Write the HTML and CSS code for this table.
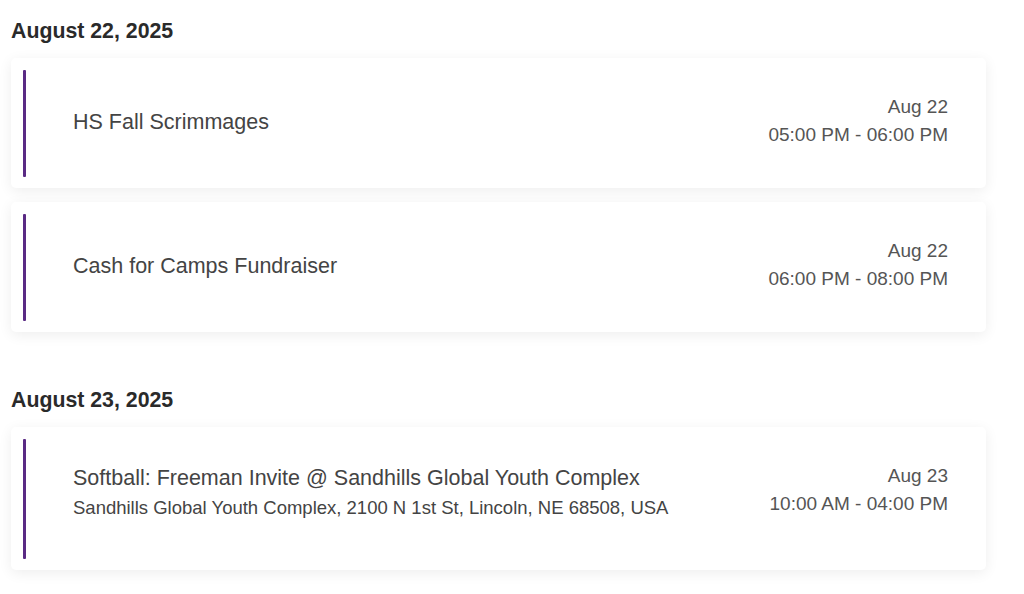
FILE: index.html
```html
<!DOCTYPE html>
<html lang="en">
<head>
<meta charset="utf-8">
<title>Events</title>
<link rel="stylesheet" href="styles.css">
</head>
<body>
<main class="page">
  <section class="day">
    <h2 class="day-title">August 22, 2025</h2>
    <div class="cards">
      <article class="card">
        <div class="bar"></div>
        <div class="content">
          <div class="info">
            <div class="title">HS Fall Scrimmages</div>
          </div>
          <div class="when">
            <div>Aug 22</div>
            <div>05:00 PM - 06:00 PM</div>
          </div>
        </div>
      </article>
      <article class="card">
        <div class="bar"></div>
        <div class="content">
          <div class="info">
            <div class="title">Cash for Camps Fundraiser</div>
          </div>
          <div class="when">
            <div>Aug 22</div>
            <div>06:00 PM - 08:00 PM</div>
          </div>
        </div>
      </article>
    </div>
  </section>
  <section class="day">
    <h2 class="day-title">August 23, 2025</h2>
    <div class="cards">
      <article class="card">
        <div class="bar"></div>
        <div class="content content--tall">
          <div class="info info--top">
            <div class="title">Softball: Freeman Invite @ Sandhills Global Youth Complex</div>
            <div class="location">Sandhills Global Youth Complex, 2100 N 1st St, Lincoln, NE 68508, USA</div>
          </div>
          <div class="when">
            <div>Aug 23</div>
            <div>10:00 AM - 04:00 PM</div>
          </div>
        </div>
      </article>
    </div>
  </section>
</main>
</body>
</html>
```

FILE: styles.css
```css
* { box-sizing: border-box; }
html, body { margin: 0; padding: 0; background: #ffffff; }
body {
  font-family: "Liberation Sans", Arial, sans-serif;
  color: #444;
}
.page {
  padding: 19px 38px 40px 11px;
  display: flex;
  flex-direction: column;
  gap: 56px;
}
.day-title {
  margin: 0 0 15px 0;
  font-size: 21.3px;
  line-height: 24px;
  font-weight: 700;
  color: #2a2a2a;
}
.cards {
  display: flex;
  flex-direction: column;
  gap: 14px;
}
.card {
  display: flex;
  background: #fff;
  border-radius: 5px;
  padding: 12px 0 11px 12px;
  box-shadow: 0 3px 14px rgba(0, 0, 0, 0.07);
}
.bar {
  width: 3px;
  flex: none;
  background: #5a2a84;
  border-radius: 1px;
}
.content {
  flex: 1;
  display: flex;
  justify-content: space-between;
  min-height: 107px;
  padding: 23px 38px 0 47px;
}
.content--tall { min-height: 120px; }
.info {
  display: flex;
  flex-direction: column;
  justify-content: center;
  margin-top: -23px;
  padding-bottom: 3px;
}
.info--top {
  justify-content: flex-start;
  margin-top: 2px;
  padding-bottom: 0;
}
.title {
  font-size: 21.5px;
  line-height: 28px;
  color: #444;
}
.location {
  margin-top: 4px;
  font-size: 18.5px;
  line-height: 24px;
  color: #444;
}
.when {
  text-align: right;
  font-size: 19px;
  line-height: 28px;
  color: #555;
}
```
